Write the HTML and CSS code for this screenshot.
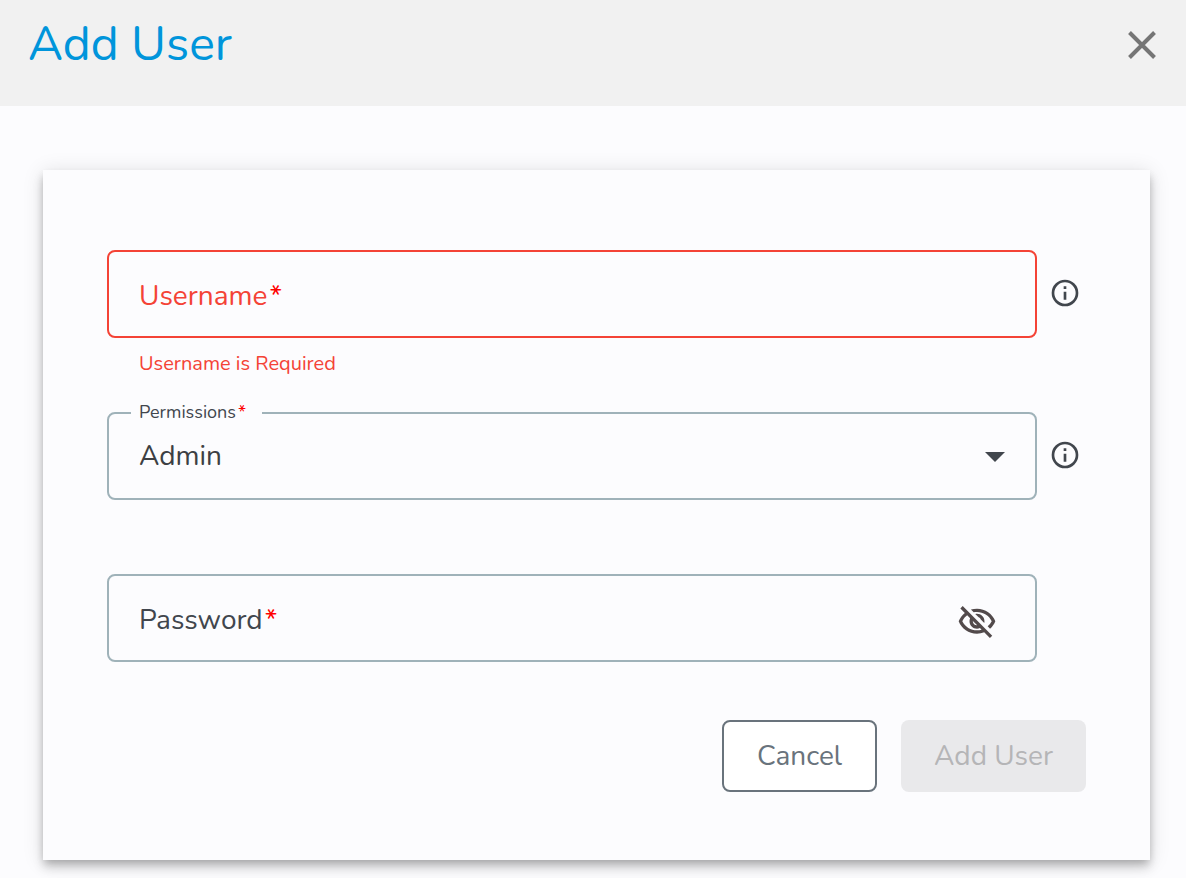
FILE: index.html
```html
<!DOCTYPE html>
<html lang="en">
<head>
<meta charset="utf-8">
<meta name="viewport" content="width=device-width, initial-scale=1">
<title>Add User</title>
<link rel="stylesheet" href="styles.css">
</head>
<body>
<header class="header">
  <h1 class="title">Add User</h1>
  <button class="icon-button" type="button" aria-label="Close">
    <svg width="32" height="32" viewBox="0 0 32 32" fill="none" stroke="#757575" stroke-width="4"><path d="M3.500 3.500L28.500 28.500M28.500 3.500L3.500 28.500"/></svg>
  </button>
</header>
<main class="content">
  <form class="card" novalidate>
    <div class="row">
      <div class="field field-error">
        <input class="control" id="username" type="text" required aria-describedby="username-error">
        <label class="label" for="username">Username<span class="star">*</span></label>
      </div>
      <button class="icon-button info" type="button" aria-label="About username">
        <svg width="32" height="32" viewBox="0 0 24 24" fill="#41464d"><path d="M11 7h2v2h-2zm0 4h2v6h-2zM12 2a10 10 0 1 0 0 20 10 10 0 0 0 0-20zm0 18a8 8 0 1 1 0-16 8 8 0 0 1 0 16z"/></svg>
      </button>
      <p class="error" id="username-error">Username is Required</p>
    </div>
    <div class="row">
      <div class="field">
        <select class="control" id="permissions" required><option>Admin</option></select>
        <label class="label label-float" for="permissions">Permissions<span class="star">*</span></label>
        <svg class="arrow" width="20" height="10" viewBox="0 0 20 10" fill="#41464d"><path d="M0 0H20L10 10Z"/></svg>
      </div>
      <button class="icon-button info" type="button" aria-label="About permissions">
        <svg width="32" height="32" viewBox="0 0 24 24" fill="#41464d"><path d="M11 7h2v2h-2zm0 4h2v6h-2zM12 2a10 10 0 1 0 0 20 10 10 0 0 0 0-20zm0 18a8 8 0 1 1 0-16 8 8 0 0 1 0 16z"/></svg>
      </button>
    </div>
    <div class="row">
      <div class="field">
        <input class="control" id="password" type="password" required>
        <label class="label" for="password">Password<span class="star">*</span></label>
        <button class="icon-button eye" type="button" aria-label="Show password">
          <svg width="40" height="40" viewBox="0 0 24 24" fill="#524a4b"><path d="M12 6c3.79 0 7.17 2.13 8.82 5.5-.59 1.22-1.42 2.27-2.41 3.12l1.41 1.41c1.39-1.23 2.49-2.77 3.18-4.53C21.27 7.11 17 4 12 4c-1.27 0-2.49.2-3.64.57l1.65 1.65C10.66 6.09 11.32 6 12 6zm-1.07 1.14L13 9.21c.57.25 1.03.71 1.28 1.28l2.07 2.07c.08-.34.14-.7.14-1.07C16.5 9.01 14.48 7 12 7c-.37 0-.72.05-1.07.14zM2.01 3.87l2.68 2.68C3.06 7.83 1.77 9.53 1 11.5 2.73 15.89 7 19 12 19c1.52 0 2.98-.29 4.32-.82l3.42 3.42 1.41-1.41L3.42 2.45 2.01 3.87zm7.5 7.5l2.61 2.61c-.04.01-.08.02-.12.02-1.38 0-2.5-1.12-2.5-2.5 0-.05.01-.08.01-.13zm-3.4-3.4l1.75 1.75c-.23.55-.36 1.15-.36 1.78 0 2.48 2.02 4.5 4.5 4.5.63 0 1.23-.13 1.77-.36l.98.98c-.88.24-1.8.38-2.75.38-3.79 0-7.17-2.13-8.82-5.5.7-1.43 1.72-2.61 2.93-3.53z"/></svg>
        </button>
      </div>
    </div>
    <div class="actions">
      <button class="button" type="button">Cancel</button>
      <button class="button button-primary" type="submit" disabled>Add User</button>
    </div>
  </form>
</main>
</body>
</html>
```

FILE: styles.css
```css
* {
  box-sizing: border-box;
}

body {
  margin: 0;
  background: #fcfcfe;
  color: #41464d;
  font-family: Nunito, Lato, sans-serif;
  font-size: 28px;
}

.header {
  display: flex;
  align-items: flex-start;
  justify-content: space-between;
  min-height: 106px;
  padding: 12px 28px;
  background: #f1f1f1;
}

.title {
  margin: 0;
  color: #0095db;
  font-size: 48px;
  font-weight: 400;
  line-height: 64px;
}

.icon-button {
  display: flex;
  padding: 0;
  border: 0;
  background: none;
  cursor: pointer;
}

.header .icon-button {
  margin-top: 17px;
}

.content {
  padding: 64px 36px 18px 43px;
}

.card {
  padding: 80px 64px 68px;
  background: #fcfcfe;
  box-shadow:
    0 4px 8px -2px rgba(0, 0, 0, 0.2),
    0 8px 10px 0 rgba(0, 0, 0, 0.14),
    0 2px 20px 0 rgba(0, 0, 0, 0.12);
}

.row {
  display: grid;
  grid-template-columns: 1fr 49px;
  grid-template-rows: 88px 1fr;
  min-height: 162px;
}

.field {
  position: relative;
}

.control {
  display: block;
  width: 100%;
  height: 100%;
  padding: 0 30px;
  border: 2px solid #9fb2b9;
  border-radius: 8px;
  outline: 0;
  appearance: none;
  background: transparent;
  color: #3d3f43;
  font: inherit;
}

.label {
  position: absolute;
  top: 26px;
  left: 32px;
  line-height: 40px;
  pointer-events: none;
}

.label-float {
  top: -12px;
  left: 24px;
  padding: 0 16px 0 8px;
  background: #fcfcfe;
  font-size: 18px;
  line-height: 24px;
}

.star {
  margin-left: 2px;
  color: #ff0000;
}

.field-error .control {
  border-color: #f44336;
}

.field-error .label,
.error {
  color: #f44336;
}

.info {
  align-self: start;
  margin: 27px 0 0 12px;
}

.error {
  margin: 12px 32px 0;
  font-size: 20px;
  line-height: 28px;
}

.arrow {
  position: absolute;
  top: 40px;
  right: 32px;
  pointer-events: none;
}

.eye {
  position: absolute;
  top: 28px;
  right: 40px;
}

.actions {
  display: flex;
  justify-content: flex-end;
  gap: 24px;
  margin-top: -16px;
}

.button {
  height: 72px;
  padding: 0 33px;
  border: 2px solid #69737c;
  border-radius: 8px;
  background: #ffffff;
  color: #69737c;
  font: inherit;
}

.button-primary {
  border: 0;
  background: #e9e9eb;
  color: #b5b5b7;
}
```
